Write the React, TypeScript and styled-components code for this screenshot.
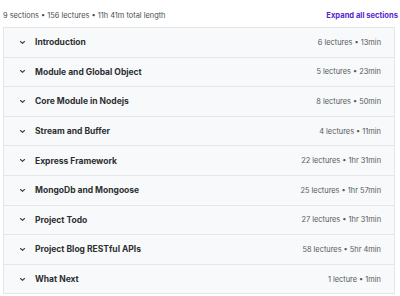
import styled, { createGlobalStyle } from "styled-components";

type Section = {
  title: string;
  meta: string;
};

const sections: Section[] = [
  { title: "Introduction", meta: "6 lectures • 13min" },
  { title: "Module and Global Object", meta: "5 lectures • 23min" },
  { title: "Core Module in Nodejs", meta: "8 lectures • 50min" },
  { title: "Stream and Buffer", meta: "4 lectures • 11min" },
  { title: "Express Framework", meta: "22 lectures • 1hr 31min" },
  { title: "MongoDb and Mongoose", meta: "25 lectures • 1hr 57min" },
  { title: "Project Todo", meta: "27 lectures • 1hr 31min" },
  { title: "Project Blog RESTful APIs", meta: "58 lectures • 5hr 4min" },
  { title: "What Next", meta: "1 lecture • 1min" },
];

function Chevron() {
  return (
    <svg width="7" height="5" viewBox="0 0 7 5" fill="none">
      <path
        d="M1.5 1.5 L3.5 3.4 L5.5 1.5"
        stroke="#3e4143"
        strokeWidth="1.1"
        strokeLinecap="round"
        strokeLinejoin="round"
      />
    </svg>
  );
}

function App() {
  return (
    <>
      <GlobalStyle />
      <Wrapper>
        <Header>
          <Summary>9 sections • 156 lectures • 11h 41m total length</Summary>
          <ExpandButton>Expand all sections</ExpandButton>
        </Header>
        <List>
          {sections.map((section) => (
            <Row key={section.title}>
              <RowLeft>
                <Chevron />
                <Title>{section.title}</Title>
              </RowLeft>
              <Meta>{section.meta}</Meta>
            </Row>
          ))}
        </List>
      </Wrapper>
    </>
  );
}

export default App;

const GlobalStyle = createGlobalStyle`
  body {
    margin: 0;
    background: #ffffff;
    font-family: Inter, "Liberation Sans", sans-serif;
    color: #2d2f31;
  }
`;

const Wrapper = styled.div`
  width: 394px;
  padding: 7px 0 0 3px;
`;

const Header = styled.div`
  display: flex;
  justify-content: space-between;
  align-items: center;
  height: 16px;
  margin-bottom: 4px;
`;

const Summary = styled.span`
  font-size: 7.4px;
  color: #4a4d50;
`;

const ExpandButton = styled.button`
  border: none;
  background: none;
  padding: 0;
  margin-right: -1px;
  font-family: inherit;
  font-size: 7.6px;
  font-weight: 700;
  color: #5624d0;
  cursor: pointer;
`;

const List = styled.div`
  border: 1px solid #e4e7ea;
  width: 390px;
`;

const Row = styled.div`
  display: flex;
  align-items: center;
  justify-content: space-between;
  height: 28.6px;
  padding: 0 13px 0 15px;
  background: #f7f9fa;
  border-bottom: 1px solid #e4e7ea;

  &:last-child {
    border-bottom: none;
  }
`;

const RowLeft = styled.div`
  display: flex;
  align-items: center;
  gap: 9px;
`;

const Title = styled.span`
  font-size: 8.5px;
  font-weight: 700;
  color: #2d2f31;
`;

const Meta = styled.span`
  font-size: 7.4px;
  color: #55595c;
`;
